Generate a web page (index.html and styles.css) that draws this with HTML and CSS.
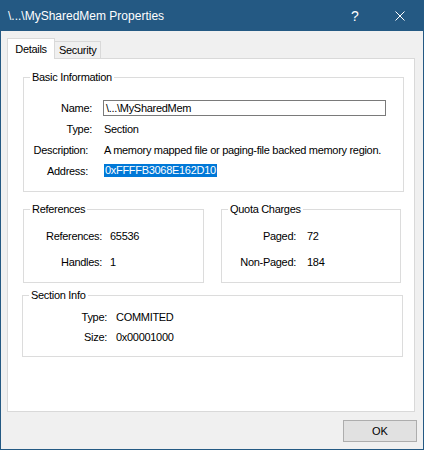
FILE: index.html
```html
<!DOCTYPE html>
<html lang="en">

<head>
    <meta charset="UTF-8">
    <title>\...\MySharedMem Properties</title>
    <link rel="stylesheet" href="styles.css">
</head>

<body>
    <div class="window">
        <div class="titlebar">
            <span class="title">\...\MySharedMem Properties</span>
            <div class="caption-btn help">?</div>
            <div class="caption-btn close">
                <svg width="10" height="10" viewBox="0 0 10 10">
                    <path d="M0.5 0.5L9.5 9.5M9.5 0.5L0.5 9.5" stroke="#fff" stroke-width="1" fill="none" />
                </svg>
            </div>
        </div>

        <div class="client">
            <div class="tabs">
                <div class="tab selected">Details</div>
                <div class="tab">Security</div>
            </div>

            <div class="panel">
                <fieldset class="group basic">
                    <legend>Basic Information</legend>
                    <div class="fields">
                        <span class="lbl">Name:</span>
                        <span class="val"><span class="textbox">\...\MySharedMem</span></span>
                        <span class="lbl">Type:</span>
                        <span class="val">Section</span>
                        <span class="lbl short">Description:</span>
                        <span class="val">A memory mapped file or paging-file backed memory region.</span>
                        <span class="lbl short">Address:</span>
                        <span class="val"><span class="selected-text">0xFFFFB3068E162D10</span></span>
                    </div>
                </fieldset>

                <div class="group-row">
                    <fieldset class="group refs">
                        <legend>References</legend>
                        <div class="fields">
                            <span class="lbl">References:</span>
                            <span class="val">65536</span>
                            <span class="lbl">Handles:</span>
                            <span class="val">1</span>
                        </div>
                    </fieldset>
                    <fieldset class="group quota">
                        <legend>Quota Charges</legend>
                        <div class="fields">
                            <span class="lbl">Paged:</span>
                            <span class="val">72</span>
                            <span class="lbl">Non-Paged:</span>
                            <span class="val">184</span>
                        </div>
                    </fieldset>
                </div>

                <fieldset class="group section">
                    <legend>Section Info</legend>
                    <div class="fields">
                        <span class="lbl">Type:</span>
                        <span class="val">COMMITED</span>
                        <span class="lbl">Size:</span>
                        <span class="val">0x00001000</span>
                    </div>
                </fieldset>
            </div>

            <div class="footer">
                <button class="btn">OK</button>
            </div>
        </div>
    </div>
</body>

</html>
```

FILE: styles.css
```css
body {
    margin: 0;
    padding: 0;
    font-family: 'Liberation Sans', Arial, sans-serif;
    font-size: 11px;
    color: #000;
    background-color: #f0f0f0;
}

.window {
    width: 424px;
    height: 450px;
    box-sizing: border-box;
    border: 1px solid #245983;
    border-top: none;
    background-color: #f0f0f0;
}

.titlebar {
    height: 31px;
    display: flex;
    align-items: center;
    background-color: #245983;
    color: #fff;
}

.title {
    flex: 1;
    padding-left: 7px;
    font-size: 12px;
}

.caption-btn {
    width: 46px;
    height: 31px;
    display: flex;
    align-items: center;
    justify-content: center;
}

.help {
    font-size: 14px;
    padding-left: 2px;
    box-sizing: border-box;
}

/* tabs */
.client {
    height: 418px;
    padding-top: 7px;
    box-sizing: border-box;
    letter-spacing: -0.3px;
}

.tabs {
    display: flex;
    align-items: flex-end;
    height: 20px;
    padding-left: 6px;
}

.tab {
    height: 16px;
    line-height: 16px;
    padding: 0 4px;
    border: 1px solid #d9d9d9;
    border-bottom: none;
    background-color: #f0f0f0;
    margin-left: -1px;
}

.tab.selected {
    position: relative;
    z-index: 1;
    width: 46px;
    height: 20px;
    line-height: 20px;
    padding: 0;
    margin-left: 0;
    margin-bottom: -1px;
    text-align: center;
    background-color: #fff;
}

.panel {
    width: 408px;
    height: 354px;
    margin-left: 6px;
    box-sizing: border-box;
    border: 1px solid #d9d9d9;
    background-color: #fff;
}

/* group boxes */
.group {
    box-sizing: border-box;
    margin: 0;
    padding: 0;
    border: 1px solid #dcdcdc;
    min-inline-size: 0;
}

.group legend {
    margin-left: 6px;
    padding: 0 2px;
    line-height: 13px;
}

.fields {
    display: grid;
    align-items: center;
}

.lbl {
    text-align: right;
}

.basic {
    width: 381px;
    margin: 12px 0 0 15px;
}

.basic .fields {
    grid-template-columns: 68px 1fr;
    grid-auto-rows: 21px;
    column-gap: 12px;
    padding: 13px 0 10px;
}

.basic .lbl.short {
    padding-right: 4px;
}

.textbox {
    display: block;
    width: 283px;
    height: 16px;
    line-height: 14px;
    margin-left: -1px;
    padding-left: 2px;
    box-sizing: border-box;
    border: 1px solid #7a7a7a;
}

.selected-text {
    display: inline-block;
    line-height: 13px;
    padding: 0 1px 0 1px;
    color: #fff;
    background-color: #0078d7;
}

.group-row {
    display: flex;
    gap: 17px;
    margin: 11px 0 0 15px;
}

.refs {
    width: 181px;
}

.quota {
    width: 180px;
}

.refs .fields,
.quota .fields {
    grid-auto-rows: 20px;
    row-gap: 6px;
    padding: 10px 0 10px;
}

.refs .fields {
    grid-template-columns: 78px 1fr;
    column-gap: 8px;
}

.quota .fields {
    grid-template-columns: 74px 1fr;
    column-gap: 11px;
}

.section {
    width: 381px;
    margin: 6px 0 0 14px;
}

.section .fields {
    grid-template-columns: 84px 1fr;
    grid-auto-rows: 20px;
    column-gap: 9px;
    padding: 5px 0 9px;
}

/* footer */
.footer {
    display: flex;
    justify-content: flex-end;
    padding: 8px 6px 0 0;
}

.btn {
    width: 74px;
    height: 22px;
    padding: 0;
    font-family: inherit;
    font-size: 11px;
    color: #000;
    background-color: #e1e1e1;
    border: 1px solid #adadad;
    border-radius: 0;
}
```
